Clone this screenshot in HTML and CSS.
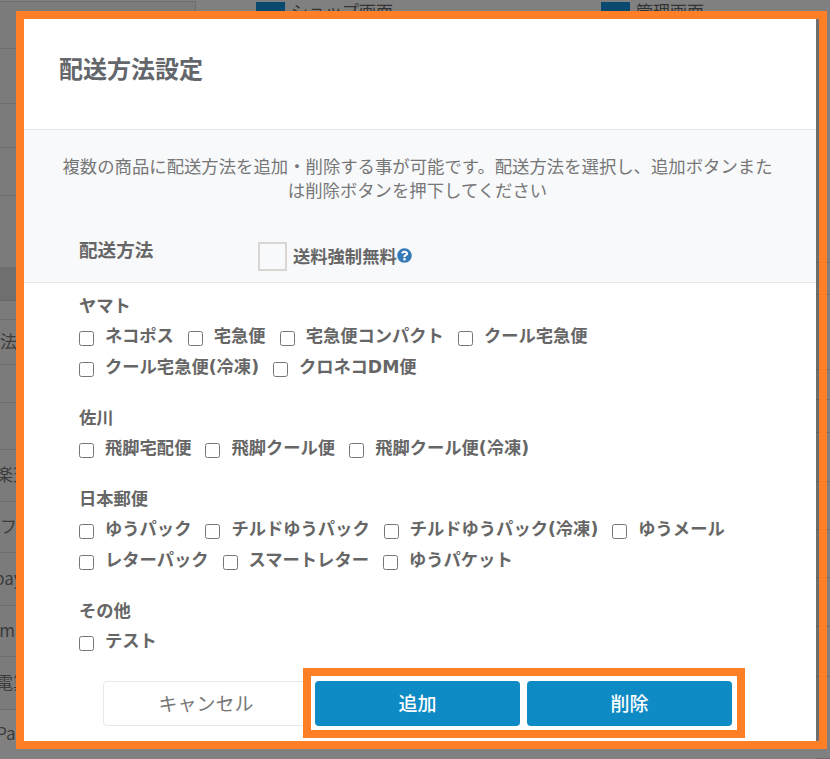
FILE: index.html
```html
<!DOCTYPE html>
<html>
	<head>
		<meta charset="UTF-8">
		<title>配送方法設定</title>
		<link rel="stylesheet" href="styles.css">
	</head>
	<body>
		<!-- dimmed page behind the dialog -->
		<div class="backdrop">
			<div class="back_rows">
				<div class="back_row back_row_top"></div>
				<div class="back_row"></div>
				<div class="back_row"></div>
				<div class="back_row"></div>
				<div class="back_row"></div>
				<div class="back_row back_row_head"></div>
				<div class="back_row"></div>
				<div class="back_row"><span class="cut_none">法</span></div>
				<div class="back_row"></div>
				<div class="back_row"></div>
				<div class="back_row"><span class="cut_small">楽天</span></div>
				<div class="back_row"><span class="cut_none">フロ</span></div>
				<div class="back_row"><span class="cut_pay">pay</span></div>
				<div class="back_row"><span class="cut_big">Amazon</span></div>
				<div class="back_row"><span class="cut_small">電算</span></div>
				<div class="back_row back_row_last"><span class="cut_small">Pai</span></div>
			</div>
			<div class="back_links">
				<div class="back_link back_link_shop"><i></i><span>ショップ画面</span></div>
				<div class="back_link"><i></i><span>管理画面</span></div>
			</div>
			<div class="back_side">
				<div></div><div></div><div></div><div></div><div></div><div></div>
				<div></div><div></div><div></div><div></div><div></div>
			</div>
		</div>

		<div class="frame">
			<div class="modal">
				<div class="modal_head">配送方法設定</div>
				<div class="modal_top">
					<p class="modal_desc">複数の商品に配送方法を追加・削除する事が可能です。配送方法を選択し、追加ボタンまたは削除ボタンを押下してください</p>
					<div class="method_row">
						<div class="method_label">配送方法</div>
						<span class="free_box"></span>
						<span class="free_text">送料強制無料</span>
						<svg class="free_help" viewBox="0 0 512 512"><path d="M504 256c0 136.997-111.043 248-248 248S8 392.997 8 256C8 119.083 119.043 8 256 8s248 111.083 248 248zM262.655 90c-54.497 0-89.255 22.957-116.549 63.758-3.536 5.286-2.353 12.415 2.715 16.258l34.699 26.31c5.205 3.947 12.621 3.008 16.665-2.122 17.864-22.658 30.113-35.797 57.303-35.797 20.429 0 45.698 13.148 45.698 32.958 0 14.976-12.363 22.667-32.534 33.976C247.128 238.528 216 254.941 216 296v4c0 6.627 5.373 12 12 12h56c6.627 0 12-5.373 12-12v-1.333c0-28.462 83.186-29.647 83.186-106.667 0-58.002-60.165-102-116.531-102zM256 338c-25.365 0-46 20.635-46 46 0 25.364 20.635 46 46 46s46-20.636 46-46c0-25.365-20.635-46-46-46z"/></svg>
					</div>
				</div>
				<div class="groups">
					<div class="group">
						<div class="group_name">ヤマト</div>
						<div class="group_items">
							<label><input type="checkbox"><span>ネコポス</span></label>
							<label><input type="checkbox"><span>宅急便</span></label>
							<label><input type="checkbox"><span>宅急便コンパクト</span></label>
							<label><input type="checkbox"><span>クール宅急便</span></label>
							<label><input type="checkbox"><span>クール宅急便(冷凍)</span></label>
							<label><input type="checkbox"><span>クロネコDM便</span></label>
						</div>
					</div>
					<div class="group">
						<div class="group_name">佐川</div>
						<div class="group_items">
							<label><input type="checkbox"><span>飛脚宅配便</span></label>
							<label><input type="checkbox"><span>飛脚クール便</span></label>
							<label><input type="checkbox"><span>飛脚クール便(冷凍)</span></label>
						</div>
					</div>
					<div class="group">
						<div class="group_name">日本郵便</div>
						<div class="group_items">
							<label><input type="checkbox"><span>ゆうパック</span></label>
							<label><input type="checkbox"><span>チルドゆうパック</span></label>
							<label><input type="checkbox"><span>チルドゆうパック(冷凍)</span></label>
							<label><input type="checkbox"><span>ゆうメール</span></label>
							<label><input type="checkbox"><span>レターパック</span></label>
							<label><input type="checkbox"><span>スマートレター</span></label>
							<label><input type="checkbox"><span>ゆうパケット</span></label>
						</div>
					</div>
					<div class="group">
						<div class="group_name">その他</div>
						<div class="group_items">
							<label><input type="checkbox"><span>テスト</span></label>
						</div>
					</div>
				</div>
				<div class="modal_foot">
					<button class="btn btn_cancel">キャンセル</button>
					<button class="btn btn_main">追加</button>
					<button class="btn btn_main">削除</button>
					<div class="foot_mark"></div>
				</div>
			</div>
		</div>
	</body>
</html>
```
FILE: styles.css
```css
*{
	margin: 0;
	padding: 0;
	box-sizing: border-box;
}
body{
	height: 759px;
	overflow: hidden;
	background-color: #808080;
	font-family: "Noto Sans CJK JP", "Noto Sans", sans-serif;
	color: #666;
}

/* page behind the dialog */
.backdrop{
	display: flex;
	height: 759px;
}
.back_rows{
	display: grid;
	grid-template-rows: 49px 55px 44px 48px 72px 33px 19px 45px 38px 47px 52px 51px 53px 51px 53px 49px;
	width: 196px;
	flex: none;
}
.back_row{
	display: flex;
	align-items: center;
	padding-bottom: 4px;
	border-bottom: 1px solid #6e6e6e;
	background-color: #7b7b7b;
	color: #3c3c3c;
	font-size: 17px;
	white-space: nowrap;
	overflow: hidden;
}
.back_row_top{
	margin-top: 1px;
	border-top: 1px solid #6e6e6e;
	border-right: 1px solid #6e6e6e;
}
.back_row_head{
	background-color: #6f6f6f;
	border-bottom: 1px solid #666;
}
.back_row_last{
	border-bottom: 0;
	background-color: #808080;
}
.cut_none{
	margin-left: 0;
}
.cut_small{
	margin-left: -4px;
}
.cut_pay{
	margin-left: -6px;
}
.cut_big{
	margin-left: -11px;
}
.back_links{
	display: flex;
	flex: 1;
	padding: 2px 0 0 60px;
}
.back_link{
	display: flex;
	gap: 6px;
	height: 9px;
	font-size: 17px;
	line-height: 18px;
	color: #333;
}
.back_link_shop{
	width: 345px;
}
.back_link i{
	display: block;
	width: 29px;
	height: 30px;
	background-color: #0a4a70;
}
.back_side{
	display: grid;
	grid-template-rows: 263px 32px 75px 30px 33px 49px 48px 48px 49px 50px 82px;
	width: 14px;
	flex: none;
}
.back_side div{
	border-bottom: 1px solid #6e6e6e;
}

/* dialog, the orange line is the highlight drawn on the shot */
.frame{
	position: absolute;
	left: 16px;
	top: 11px;
	width: 811px;
	height: 738px;
	padding-right: 3px;
	border: 8px solid #ff7f27;
}
.modal{
	display: flex;
	flex-direction: column;
	height: 722px;
	background-color: #fff;
	box-shadow: 3px 0 0 rgba(0,0,0,.14);
}
.modal_head{
	height: 111px;
	padding: 31px 0 0 35px;
	border-bottom: 1px solid #e4e6e9;
	font-size: 24px;
	font-weight: 700;
	line-height: 36px;
	color: #63666a;
}
.modal_top{
	height: 153px;
	padding-top: 24px;
	border-bottom: 1px solid #e4e6e9;
	background-color: #f8f9fb;
}
.modal_desc{
	padding: 0 37px 0 32px;
	text-align: center;
	font-size: 17.37px;
	line-height: 24px;
	color: #777;
}
.method_row{
	display: flex;
	align-items: flex-start;
	margin-top: 40px;
	padding-left: 55px;
}
.method_label{
	width: 179px;
	font-size: 18.6px;
	font-weight: 700;
	line-height: 14px;
}
.free_box{
	width: 29px;
	height: 29px;
	border: 2px solid #d9d5d0;
	background-color: #f8f9fb;
}
.free_text{
	margin-left: 6px;
	font-size: 17.3px;
	font-weight: 700;
	line-height: 28px;
}
.free_help{
	width: 15px;
	height: 15px;
	margin-top: 6px;
	fill: #337ab7;
}
.groups{
	padding: 6px 0 0 55px;
}
.group{
	margin-bottom: 19px;
}
.group_name{
	font-size: 17.3px;
	font-weight: 700;
	line-height: 31px;
}
.group_items{
	display: flex;
	flex-wrap: wrap;
	width: 670px;
	font-family: "DejaVu Sans", "Noto Sans CJK JP", sans-serif;
}
.group_items label{
	display: flex;
	height: 31px;
	margin-right: 14px;
	font-size: 17.3px;
	font-weight: 700;
	line-height: 31px;
}
.group_items input{
	width: 15px;
	height: 15px;
	margin: 11px 11px 0 0;
}
.group_items span{
	margin-top: 1px;
}
.modal_foot{
	position: relative;
	display: flex;
	gap: 7px;
	margin-top: auto;
	padding: 0 0 15px 79px;
}
.btn{
	width: 205px;
	height: 45px;
	padding-bottom: 2px;
	border-radius: 4px;
	font-family: inherit;
	font-size: 19px;
}
.btn_cancel{
	width: 206px;
	margin-right: -1px;
	border: 1px solid #e8e8e8;
	background-color: #fff;
	color: #777;
}
.btn_main{
	border: 0;
	background-color: #0e8ac4;
	color: #fff;
	font-weight: 500;
}
.foot_mark{
	position: absolute;
	left: 279px;
	top: -13px;
	width: 442px;
	height: 70px;
	border: 8px solid #ff7f27;
}
```
